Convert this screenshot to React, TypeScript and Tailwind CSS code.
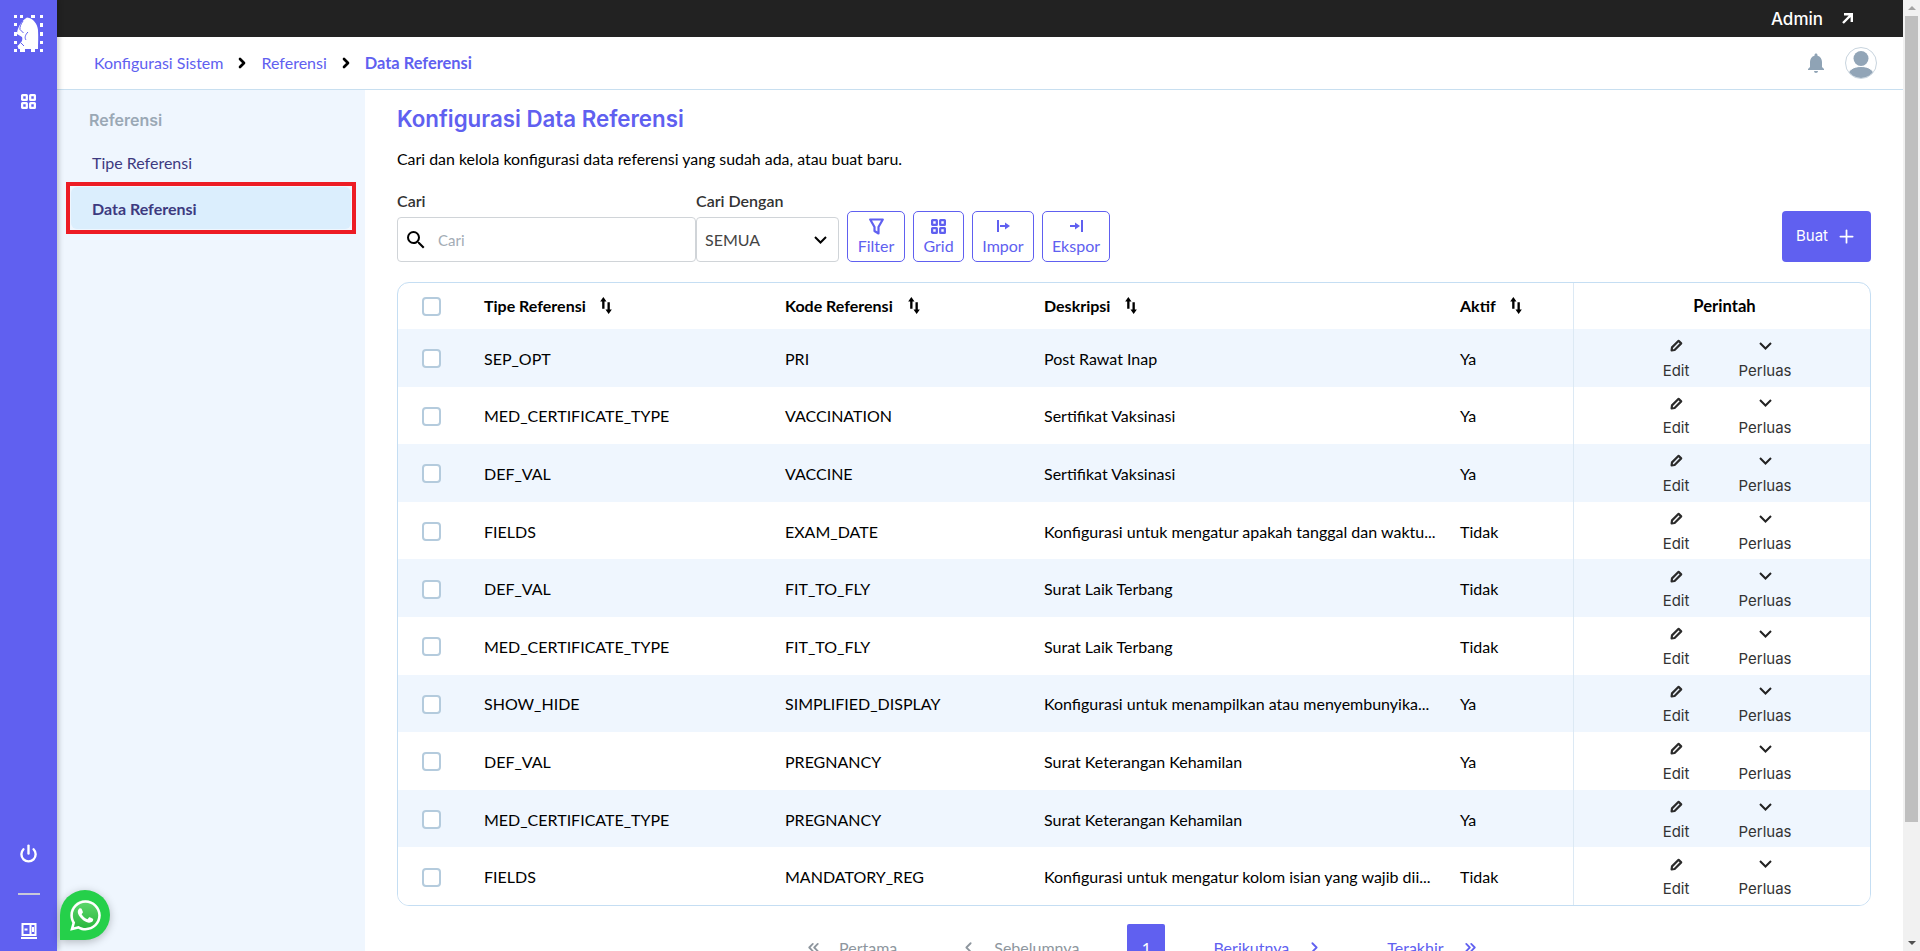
import { ChevronLeft, ChevronRight, ChevronsLeft, ChevronsRight, Plus, Power } from "lucide-react";
import { FaWhatsapp } from "react-icons/fa";
import { MdNotifications, MdSearch } from "react-icons/md";

const rows = [
  { tipe: "SEP_OPT", kode: "PRI", deskripsi: "Post Rawat Inap", aktif: "Ya" },
  { tipe: "MED_CERTIFICATE_TYPE", kode: "VACCINATION", deskripsi: "Sertifikat Vaksinasi", aktif: "Ya" },
  { tipe: "DEF_VAL", kode: "VACCINE", deskripsi: "Sertifikat Vaksinasi", aktif: "Ya" },
  { tipe: "FIELDS", kode: "EXAM_DATE", deskripsi: "Konfigurasi untuk mengatur apakah tanggal dan waktu...", aktif: "Tidak" },
  { tipe: "DEF_VAL", kode: "FIT_TO_FLY", deskripsi: "Surat Laik Terbang", aktif: "Tidak" },
  { tipe: "MED_CERTIFICATE_TYPE", kode: "FIT_TO_FLY", deskripsi: "Surat Laik Terbang", aktif: "Tidak" },
  { tipe: "SHOW_HIDE", kode: "SIMPLIFIED_DISPLAY", deskripsi: "Konfigurasi untuk menampilkan atau menyembunyika...", aktif: "Ya" },
  { tipe: "DEF_VAL", kode: "PREGNANCY", deskripsi: "Surat Keterangan Kehamilan", aktif: "Ya" },
  { tipe: "MED_CERTIFICATE_TYPE", kode: "PREGNANCY", deskripsi: "Surat Keterangan Kehamilan", aktif: "Ya" },
  { tipe: "FIELDS", kode: "MANDATORY_REG", deskripsi: "Konfigurasi untuk mengatur kolom isian yang wajib dii...", aktif: "Tidak" },
];

function Logo() {
  const dashes = [
    [0, 0, 3, 3], [6, 0, 3, 3], [17, 0, 4, 3], [26, 0, 3, 3],
    [0, 8, 3, 3], [26, 8, 3, 4], [0, 17, 3, 4], [26, 17, 3, 4], [0, 26, 3, 3], [26, 26, 3, 3],
    [0, 34, 3, 3], [6, 34, 5, 3], [17, 34, 4, 3], [26, 34, 3, 3],
  ];
  return (
    <svg width="29" height="37" viewBox="0 0 29 37">
      {dashes.map(([x, y, w, h], i) => (
        <rect key={i} x={x} y={y} width={w} height={h} fill="white" />
      ))}
      <path d="M13 2.5 C19 3 23.5 9 24 15 C24.5 22 24 29 24 34 H4.5 L3.5 31 C8 27 9 25 8 22 L3 19 C3 14 7 6 13 2.5 Z" fill="white" />
      <path d="M9 6 C7 9 5.5 12 6 14.5 L9.5 18 M14 17 C11 20 10.5 23 12 25 M7 28 L10 31" fill="none" stroke="#6060f0" strokeWidth="1" />
    </svg>
  );
}

function GridIcon({ size = 16 }: { size?: number }) {
  return (
    <svg width={size} height={size} viewBox="0 0 16 16" fill="none" stroke="currentColor" strokeWidth="2.4">
      <rect x="1.2" y="1.2" width="5" height="5" rx="0.4" />
      <rect x="9.8" y="1.2" width="5" height="5" rx="0.4" />
      <rect x="1.2" y="9.8" width="5" height="5" rx="0.4" />
      <rect x="9.8" y="9.8" width="5" height="5" rx="0.4" />
    </svg>
  );
}

function SortIcon() {
  return (
    <svg width="12" height="17" viewBox="0 0 11 16" fill="black" className="mb-[2px]">
      <path d="M3 0 L6 4.2 H4.1 V11 H1.9 V4.2 H0 Z" />
      <path d="M8 16 L5 11.8 H6.9 V5 H9.1 V11.8 H11 Z" />
    </svg>
  );
}

function PencilIcon() {
  return (
    <svg width="13" height="13" viewBox="0 0 13 13" fill="none" stroke="#2b2b2b" strokeWidth="2.2" strokeLinejoin="round">
      <path d="M1.6 11.4 L2 8.4 L8.6 1.8 L11.2 4.4 L4.6 11 Z" />
    </svg>
  );
}

function Chevron({ color = "#222" }: { color?: string }) {
  return (
    <svg width="13" height="8" viewBox="0 0 13 8" fill="none" stroke={color} strokeWidth="2">
      <path d="M1 1l5.5 5.5L12 1" />
    </svg>
  );
}

function ToolButton({ label, width, children }: { label: string; width: string; children: React.ReactNode }) {
  return (
    <button className={`${width} h-[51px] flex flex-col items-center justify-end pb-[5px] rounded-[5px] border border-[#6060f0] text-[#6060f0] text-[16px] leading-[20px]`}>
      <span className="h-[20px] flex items-center">{children}</span>
      {label}
    </button>
  );
}

const columns = "grid grid-cols-[86px_301px_259px_416px_113px_1fr]";

export default function App() {
  return (
    <div className="relative flex h-[951px] overflow-hidden bg-white text-black" style={{ fontFamily: "Lato, sans-serif" }}>
      {/* rail */}
      <aside className="w-[57px] shrink-0 bg-[#6060f0] flex flex-col items-center text-white shadow-[2px_0_5px_rgba(0,0,0,0.2)] z-10">
        <div className="mt-[15px] h-[37px]">
          <Logo />
        </div>
        <div className="mt-[42px]">
          <GridIcon size={15} />
        </div>
        <div className="mt-auto flex flex-col items-center">
          <Power size={19} strokeWidth={3} />
          <div className="mt-[30px] w-[22px] h-[2px] bg-[#c9c9d8]" />
          <svg className="mt-[28px] mb-[12px]" width="16" height="16" viewBox="0 0 16 16" fill="none" stroke="white" strokeWidth="2">
            <path d="M1.5 1h13v11h-13zM0 15h16M9.5 1v11" />
            <path d="M3.5 6.5h3M12 4v5" />
          </svg>
        </div>
      </aside>

      <div className="flex-1 min-w-0 flex flex-col">
        {/* top bar */}
        <header className="h-[37px] shrink-0 bg-[#222222] text-white flex items-center justify-end pr-[50px]">
          <span className="text-[17px] font-medium mt-[2px]" style={{ fontFamily: "Inter, sans-serif" }}>Admin</span>
          <svg className="ml-[19px] mb-[1px]" width="11" height="11" viewBox="0 0 11 11" fill="none" stroke="white" strokeWidth="2.4">
            <path d="M2 1.2h7.8V9M9.8 1.2 1 10" />
          </svg>
        </header>

        {/* breadcrumb */}
        <div className="h-[53px] shrink-0 border-b border-[#c8dff0] flex items-center pl-[37px] pr-[26px] text-[16px] text-[#6060f0]">
          <span>Konfigurasi Sistem</span>
          <ChevronRight className="mx-[11px] text-black" size={16} strokeWidth={4} />
          <span>Referensi</span>
          <ChevronRight className="mx-[11px] text-black" size={16} strokeWidth={4} />
          <span className="font-bold text-[16.4px]">Data Referensi</span>
          <MdNotifications className="ml-auto text-[#8fa3b5]" size={24} />
          <div className="ml-[17px] w-[32px] h-[32px] rounded-full border border-[#c8d4de] overflow-hidden flex items-end justify-center">
            <svg width="30" height="30" viewBox="0 0 30 30" fill="#92a5b7">
              <circle cx="15" cy="10.5" r="7.5" />
              <path d="M1 31c0-9 6-12.5 14-12.5S29 22 29 31z" stroke="white" strokeWidth="1" />
            </svg>
          </div>
        </div>

        <div className="flex-1 min-h-0 flex">
          {/* side panel */}
          <nav className="w-[308px] shrink-0 bg-[#eff6fe] pt-[20px] pl-[9px]">
            <div className="pl-[23px] text-[16px] leading-[20px] font-semibold text-[#9aa8b5]" style={{ fontFamily: "Inter, sans-serif" }}>Referensi</div>
            <div className="mt-[13px] pl-[26px] h-[39px] flex items-center text-[16px] text-[#3d3a80]">Tipe Referensi</div>
            <div className="w-[290px] h-[52px] border-[4px] border-[#ed1c24] p-[1px]">
              <div className="h-full rounded-[6px] bg-[#dbeefd] flex items-center pl-[21px] text-[16px] font-bold text-[#3d3a80]">
                <span className="mt-[2px]">Data Referensi</span>
              </div>
            </div>
          </nav>

          {/* content */}
          <main className="flex-1 min-w-0 pl-[32px] pr-[32px] pt-[15px]">
            <h1 className="text-[22.3px] leading-[28px] font-semibold text-[#6060f0]" style={{ fontFamily: "Inter, sans-serif" }}>Konfigurasi Data Referensi</h1>
            <p className="mt-[16px] text-[15.9px] leading-[20px]">Cari dan kelola konfigurasi data referensi yang sudah ada, atau buat baru.</p>

            <div className="mt-[22px] flex items-end">
              <div className="w-[299px]">
                <label className="block text-[16px] leading-[20px] font-semibold text-[#333]">Cari</label>
                <div className="mt-[6px] h-[45px] border border-[#d0d4d8] rounded-[4px] flex items-center pl-[6px]">
                  <MdSearch size={24} className="text-black" />
                  <span className="ml-[10px] mt-[1px] text-[15px] text-[#a3acb5]">Cari</span>
                </div>
              </div>
              <div className="w-[143px]">
                <label className="block text-[16px] leading-[20px] font-semibold text-[#333]">Cari Dengan</label>
                <div className="mt-[6px] h-[45px] border border-[#d0d4d8] rounded-[4px] flex items-center justify-between pl-[8px] pr-[11px] text-[16px] text-[#444]">
                  <span className="mt-[1px]">SEMUA</span>
                  <Chevron color="#000" />
                </div>
              </div>
              <div className="ml-[8px] flex gap-[8px]">
                <ToolButton label="Filter" width="w-[58px]">
                  <svg width="15" height="17" viewBox="0 0 15 17" fill="none" stroke="currentColor" strokeWidth="2.2" strokeLinejoin="round">
                    <path d="M1.2 1.5h12.6L9.5 9v6.5l-4-2.5V9z" />
                  </svg>
                </ToolButton>
                <ToolButton label="Grid" width="w-[51px]"><GridIcon size={15} /></ToolButton>
                <ToolButton label="Impor" width="w-[62px]">
                  <svg width="13" height="12" viewBox="0 0 13 12" fill="none" stroke="currentColor" strokeWidth="2">
                    <path d="M1 0v12M3 6h6" />
                    <path d="M8 2.5l5 3.5-5 3.5z" fill="currentColor" strokeWidth="0" />
                  </svg>
                </ToolButton>
                <ToolButton label="Ekspor" width="w-[68px]">
                  <svg width="13" height="12" viewBox="0 0 13 12" fill="none" stroke="currentColor" strokeWidth="2">
                    <path d="M12 0v12M0 6h6" />
                    <path d="M5 2.5l5 3.5-5 3.5z" fill="currentColor" strokeWidth="0" />
                  </svg>
                </ToolButton>
              </div>
              <button className="ml-auto w-[89px] h-[51px] rounded-[4px] bg-[#6060f0] text-white text-[15px] flex items-center justify-center gap-[8px]" style={{ fontFamily: "Inter, sans-serif" }}>
                Buat
                <Plus size={21} strokeWidth={2} />
              </button>
            </div>

            {/* table */}
            <div className="mt-[20px] border border-[#c5def3] rounded-[12px] overflow-hidden">
              <div className={`${columns} h-[46px] items-center text-[16px] font-bold`}>
                <div className="pl-[24px]"><span className="block w-[19px] h-[19px] rounded-[4px] border-2 border-[#b4cbdd] bg-white" /></div>
                <div className="flex items-center gap-[14px]">Tipe Referensi <SortIcon /></div>
                <div className="flex items-center gap-[15px]">Kode Referensi <SortIcon /></div>
                <div className="flex items-center gap-[15px]">Deskripsi <SortIcon /></div>
                <div className="flex items-center gap-[14px]">Aktif <SortIcon /></div>
                <div className="h-full border-l border-[#dce9f4] flex items-center justify-center pl-[5px] text-[16.6px]">Perintah</div>
              </div>
              {rows.map((r, i) => (
                <div key={i} className={`${columns} h-[57.6px] items-center text-[16px] ${i % 2 === 0 ? "bg-[#eff6fe]" : "bg-white"}`}>
                  <div className="mt-[2px] pl-[24px]"><span className="block w-[19px] h-[19px] rounded-[4px] border-2 border-[#b4cbdd] bg-white" /></div>
                  <div className="mt-[2px]">{r.tipe}</div>
                  <div className="mt-[2px]">{r.kode}</div>
                  <div className="mt-[2px] truncate pr-[12px]">{r.deskripsi}</div>
                  <div className="mt-[2px]">{r.aktif}</div>
                  <div className="h-full border-l border-[#dce9f4] flex items-center pl-[76px] gap-[37px] text-[15px] leading-[20px] text-[#333]" style={{ fontFamily: "Inter, sans-serif" }}>
                    <div className="w-[52px] flex flex-col items-center">
                      <span className="mt-[4px] h-[14px] mb-[8px] flex items-center"><PencilIcon /></span>Edit
                    </div>
                    <div className="w-[52px] flex flex-col items-center">
                      <span className="mt-[4px] h-[14px] mb-[8px] flex items-center"><Chevron /></span>Perluas
                    </div>
                  </div>
                </div>
              ))}
            </div>

            {/* pagination */}
            <div className="mt-[18px] flex items-start text-[16px]">
              <div className="ml-[408px] pt-[12px] flex items-center text-[#8e969e]">
                <ChevronsLeft size={17} strokeWidth={2.5} /><span className="ml-[17px]">Pertama</span>
              </div>
              <div className="ml-[63px] pt-[12px] flex items-center text-[#8e969e]">
                <ChevronLeft size={17} strokeWidth={2.5} /><span className="ml-[17px]">Sebelumnya</span>
              </div>
              <div className="ml-[48px] w-[38px] h-[40px] bg-[#6060f0] text-white rounded-[2px] flex items-center justify-center pt-[8px]">1</div>
              <div className="ml-[48px] pt-[12px] flex items-center text-[#6060f0]">
                <span>Berikutnya</span><ChevronRight className="ml-[17px]" size={17} strokeWidth={2.5} />
              </div>
              <div className="ml-[64px] pt-[12px] flex items-center text-[#6060f0]">
                <span>Terakhir</span><ChevronsRight className="ml-[18px]" size={17} strokeWidth={2.5} />
              </div>
            </div>
          </main>
        </div>
      </div>

      {/* window scrollbar */}
      <div className="w-[17px] shrink-0 bg-[#f1f1f1] flex flex-col items-center">
        <div className="h-[16px] flex items-center"><span className="w-0 h-0 border-x-[4px] border-x-transparent border-b-[4px] border-b-[#a3a3a3]" /></div>
        <div className="w-[13px] h-[806px] bg-[#bfbfbf]" />
        <div className="mt-auto h-[16px] flex items-center"><span className="w-0 h-0 border-x-[4px] border-x-transparent border-t-[4px] border-t-[#505050]" /></div>
      </div>

      {/* whatsapp */}
      <div className="absolute left-[60px] top-[890px] w-[50px] h-[50px] rounded-full rounded-bl-[10px] bg-[#25d04a] shadow-[0_2px_8px_rgba(0,0,0,0.25)] flex items-center justify-center z-20">
        <span className="absolute w-[30px] h-[30px] rounded-full bg-gradient-to-b from-[#5fd96e] to-[#22b53a]" />
        <FaWhatsapp className="relative text-white" size={35} />
      </div>
    </div>
  );
}
